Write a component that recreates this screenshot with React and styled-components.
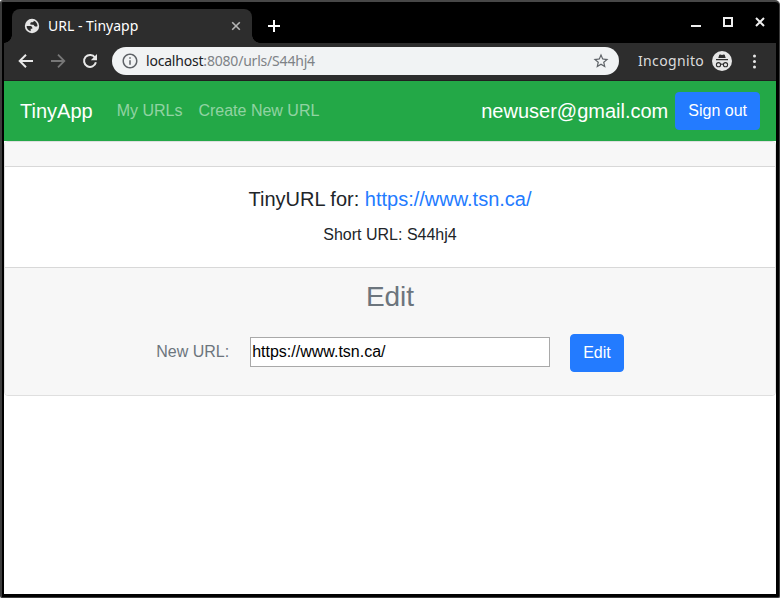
import React from "react";
import styled, { createGlobalStyle } from "styled-components";
import { MdInfoOutline, MdStarBorder } from "react-icons/md";

const GlobalStyle = createGlobalStyle`
  *, *::before, *::after { box-sizing: border-box; }
  body { margin: 0; background: #fff; font-family: "Liberation Sans", Arial, sans-serif; }
  svg { display: block; flex: none; }
`;

const Frame = styled.div`
  width: 780px;
  height: 598px;
  overflow: hidden;
  background: #000;
  border: solid #3c3c3c;
  border-width: 2px 1px 1px 2px;
  border-top-color: #474747;
  border-radius: 3px 5px 2px 2px;
  padding: 0 3px 3px 2px;
  display: flex;
  flex-direction: column;
`;

const TitleBar = styled.div`
  height: 41px;
  flex: none;
  display: flex;
  padding-top: 7px;
`;

const Tab = styled.div`
  position: relative;
  width: 240px;
  height: 34px;
  margin-left: 8px;
  padding: 0 11px 0 12px;
  border-radius: 8px 8px 0 0;
  background: #2d2d2d;
  color: #fff;
  display: flex;
  align-items: center;
  &::before, &::after {
    content: "";
    position: absolute;
    bottom: 0;
    width: 8px;
    height: 8px;
  }
  &::before { left: -8px; background: radial-gradient(circle at 0 0, #000 7.5px, #2d2d2d 8px); }
  &::after { right: -8px; background: radial-gradient(circle at 100% 0, #000 7.5px, #2d2d2d 8px); }
`;

const ChromeText = styled.span`
  font-family: "Noto Sans", "Open Sans", sans-serif;
  font-size: 14px;
  line-height: 20px;
  letter-spacing: ${(p) => p.$spacing || 0}px;
  color: ${(p) => p.$color || "#fff"};
  white-space: nowrap;
`;

const TabTitle = styled(ChromeText)`
  flex: 1;
  margin-left: 8px;
`;

const NewTab = styled.div`
  margin: 11px 0 0 16px;
`;

const WindowControls = styled.div`
  margin: 6px 10px 0 auto;
  display: flex;
  gap: 20px;
  height: 14px;
`;

const Toolbar = styled.div`
  height: 38px;
  flex: none;
  display: flex;
  align-items: center;
  padding: 0 20px 2px 12px;
  background: #2d2d2d;
  border-bottom: 1px solid #202020;
  color: #e8eaed;
`;

const NavButton = styled.span`
  width: 20px;
  margin-right: 12px;
  display: flex;
  justify-content: center;
`;

const AddressBar = styled.div`
  width: 507px;
  height: 28px;
  border-radius: 14px;
  background: #f1f3f4;
  color: #5f6368;
  display: flex;
  align-items: center;
  padding: 0 9px;
`;

const Address = styled(ChromeText)`
  flex: 1;
  margin-left: 7px;
  & b { font-weight: 400; color: #202124; }
`;

const Profile = styled.div`
  margin-left: 19px;
  flex: 1;
  display: flex;
  align-items: center;
  & > svg:last-child { margin-left: auto; }
`;

const ProfileLabel = styled(ChromeText)`
  width: 74px;
`;

const Page = styled.main`
  flex: 1;
  background: #fff;
  color: #212529;
  font-size: 16px;
  line-height: 24px;
`;

const Navbar = styled.nav`
  height: 60px;
  background: #23a847;
  padding: 0 16px;
  display: flex;
  align-items: center;
`;

const Brand = styled.span`
  color: #fff;
  font-size: 20px;
  line-height: 30px;
  margin-right: ${(p) => p.$gap}px;
`;

const NavLink = styled.a`
  color: rgba(255, 255, 255, 0.5);
  margin-right: 16px;
`;

const Account = styled.div`
  margin-left: auto;
  display: flex;
  align-items: center;
`;

const Button = styled.button`
  height: 38px;
  padding: 0 12px;
  border: 1px solid #237bff;
  border-radius: 4px;
  background: #237bff;
  color: #fff;
  font: 16px/24px "Liberation Sans", Arial, sans-serif;
`;

const Card = styled.section`
  height: 255px;
  border: 1px solid #dfdfdf;
  border-radius: 4px;
  overflow: hidden;
  text-align: center;
`;

const CardHeader = styled.div`
  height: 25px;
  background: #f7f7f7;
  border-bottom: 1px solid #d8d8d8;
`;

const CardBody = styled.div`
  height: 100px;
  padding-top: 20px;
`;

const CardTitle = styled.h5`
  margin: 0 0 12px;
  font-size: 20px;
  line-height: 24px;
  font-weight: 400;
  & a { color: #237bff; }
`;

const CardFooter = styled.div`
  height: 128px;
  padding-top: 12px;
  background: #f7f7f7;
  border-top: 1px solid #d8d8d8;
  color: #6c757d;
`;

const FooterTitle = styled.h3`
  margin: 0;
  font-size: 28px;
  line-height: 34px;
  font-weight: 400;
`;

const Form = styled.form`
  margin-top: 20px;
  display: flex;
  justify-content: center;
  align-items: center;
`;

const Label = styled.label`
  margin: -3px 21px 0 0;
`;

const Input = styled.input`
  width: 300px;
  height: 30px;
  margin: -2px 20px 0 0;
  padding: 0 1px 1px;
  border: 1px solid #a9a9a9;
  border-radius: 0;
  outline: 0;
  color: #000;
  font: 16px "Liberation Sans", Arial, sans-serif;
`;

const StrokeIcon = ({ size, d, color = "#fff", width = 2 }) => (
  <svg width={size} height={size} viewBox={`0 0 ${size} ${size}`} fill="none" stroke={color} strokeWidth={width}>
    <path d={d} />
  </svg>
);

const GlobeIcon = () => (
  <svg width="16" height="16" viewBox="0 0 16 16">
    <circle cx="8" cy="8" r="7.2" fill="#e6e6e6" />
    <path
      d="M2.6 8h3.2c1.500 0 2.500.6 2.500 1.900v.9H6.700v2.500C4.200 12.500 2.500 10.500 2.600 8ZM9.900 2.700c-.2 1.200-1 1.600-2.300 1.600-.9 0-1.300.6-1.300 1.200 0 .8.500 1.200 1.300 1.200h1.200c.9 0 1.200.6 1.600 1.200.8.9 2.400.900 3.100.100C13.400 5.500 12 3.500 9.900 2.700Z"
      fill="#2d2d2d"
    />
  </svg>
);

const ReloadIcon = () => (
  <svg width="16" height="16" viewBox="0 0 16 16">
    <path d="M13 4.5A6 6 0 1 0 13.900 9.300" fill="none" stroke="#e8e8e8" strokeWidth="2" />
    <path d="M15 1v6.200H8.800Z" fill="#e8e8e8" />
  </svg>
);

const IncognitoIcon = () => (
  <svg width="20" height="20" viewBox="0 0 20 20">
    <circle cx="10" cy="10" r="10" fill="#e6e6e6" />
    <path d="M6.300 7 7.200 4.100Q7.400 3.300 8.200 3.500L10 4l1.800-.5q.8-.2 1 .6L13.700 7Z" fill="#2d2d2d" />
    <path d="M4 8.600h12" stroke="#2d2d2d" strokeWidth="1.2" />
    <g fill="none" stroke="#2d2d2d" strokeWidth="1.1">
      <circle cx="6.5" cy="13.7" r="2.1" />
      <circle cx="13.5" cy="13.7" r="2.1" />
      <path d="M8.600 13.400q1.400-.8 2.800 0" />
    </g>
  </svg>
);

const MenuDots = () => (
  <svg width="4" height="16" viewBox="0 0 4 16" fill="#e8e8e8">
    <circle cx="2.5" cy="3" r="1.5" />
    <circle cx="2.5" cy="8.5" r="1.5" />
    <circle cx="2.5" cy="14" r="1.5" />
  </svg>
);

export default function App() {
  return (
    <>
      <GlobalStyle />
      <Frame>
        <TitleBar>
          <Tab>
            <GlobeIcon />
            <TabTitle>URL - Tinyapp</TabTitle>
            <StrokeIcon size={10} d="M1.2 1.2 8.8 8.8M8.8 1.2 1.2 8.8" color="#b5b5b5" width={1.6} />
          </Tab>
          <NewTab>
            <StrokeIcon size={12} d="M6 0V12M0 6H12" />
          </NewTab>
          <WindowControls>
            <StrokeIcon size={12} d="M1 11H11" color="#eee" />
            <StrokeIcon size={12} d="M2 3H10V11H2Z" color="#eee" />
            <StrokeIcon size={12} d="M2 3 10 11M10 3 2 11" color="#eee" />
          </WindowControls>
        </TitleBar>
        <Toolbar>
          <NavButton><StrokeIcon size={16} d="M15 8H2.5M8 1.7 1.7 8 8 14.3" color="#e8e8e8" /></NavButton>
          <NavButton><StrokeIcon size={16} d="M1 8H13.5M8 1.7 14.3 8 8 14.3" color="#777" width={1.8} /></NavButton>
          <NavButton><ReloadIcon /></NavButton>
          <AddressBar>
            <MdInfoOutline size={18} />
            <Address $spacing={-0.2} $color="#7e8286"><b>localhost</b>:8080/urls/S44hj4</Address>
            <MdStarBorder size={18} />
          </AddressBar>
          <Profile>
            <ProfileLabel $spacing={0.35} $color="#dcdcdc">Incognito</ProfileLabel>
            <IncognitoIcon />
            <MenuDots />
          </Profile>
        </Toolbar>
        <Page>
          <Navbar>
            <Brand $gap={24}>TinyApp</Brand>
            <NavLink>My URLs</NavLink>
            <NavLink>Create New URL</NavLink>
            <Account>
              <Brand $gap={7}>newuser@gmail.com</Brand>
              <Button type="button">Sign out</Button>
            </Account>
          </Navbar>
          <Card>
            <CardHeader />
            <CardBody>
              <CardTitle>TinyURL for: <a>https://www.tsn.ca/</a></CardTitle>
              <div>Short URL: S44hj4</div>
            </CardBody>
            <CardFooter>
              <FooterTitle>Edit</FooterTitle>
              <Form>
                <Label htmlFor="url">New URL:</Label>
                <Input id="url" defaultValue="https://www.tsn.ca/" />
                <Button type="button">Edit</Button>
              </Form>
            </CardFooter>
          </Card>
        </Page>
      </Frame>
    </>
  );
}
